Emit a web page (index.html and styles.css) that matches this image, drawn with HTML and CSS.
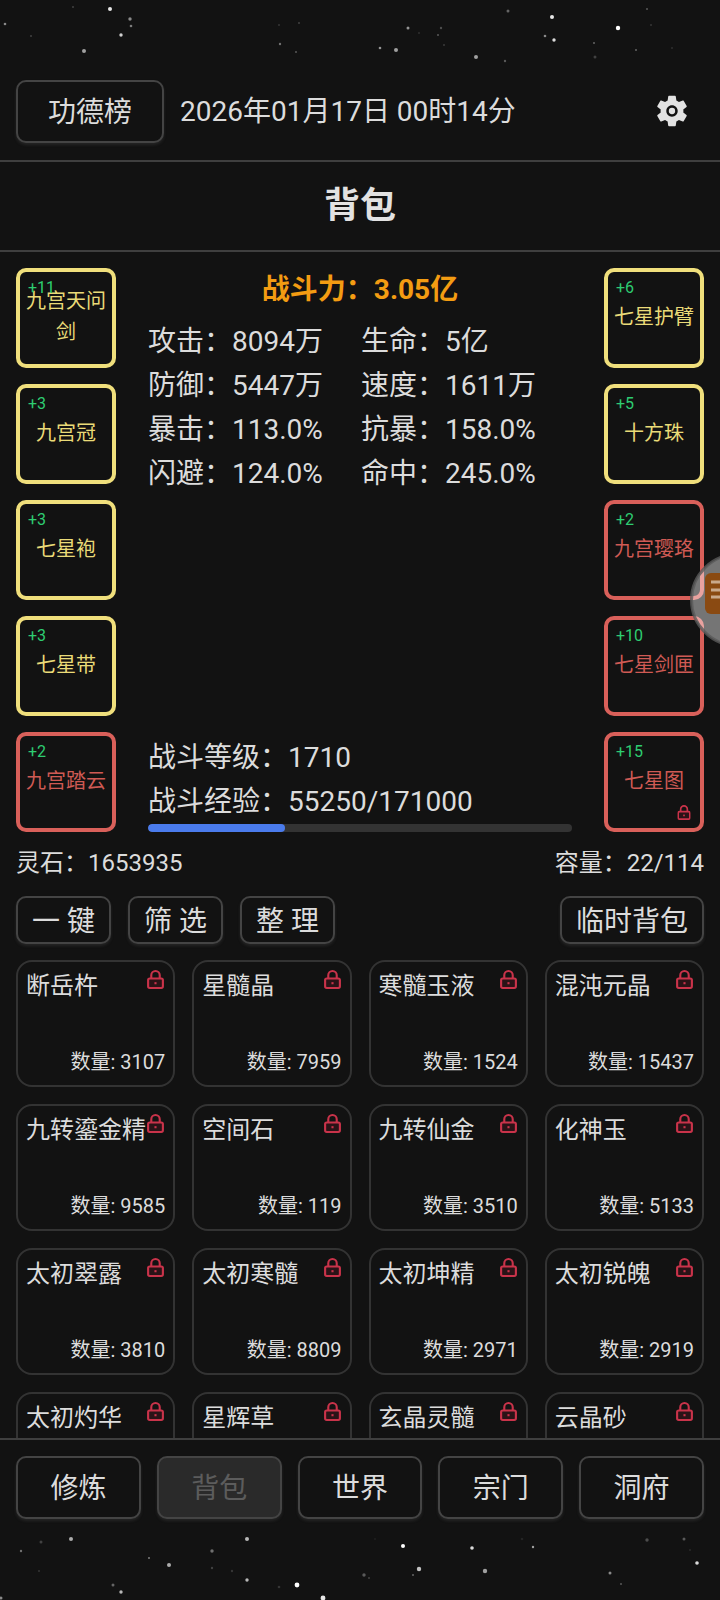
FILE: index.html
```html
<!DOCTYPE html>
<html lang="zh-CN">
<head>
<meta charset="utf-8">
<title>背包</title>
<link rel="stylesheet" href="styles.css">
</head>
<body>
<div class="app">
  <svg class="stars" width="720" height="1600" viewBox="0 0 720 1600" aria-hidden="true">
    <g fill="#fff">
      <circle cx="110" cy="9" r="2" opacity=".9"/><circle cx="130" cy="19" r="1.7" opacity=".5"/><circle cx="131" cy="26" r="1.3" opacity=".45"/><circle cx="121" cy="35" r="1.7" opacity=".8"/><circle cx="84" cy="51" r="2" opacity=".6"/><circle cx="5" cy="24" r="1.3" opacity=".5"/><circle cx="73" cy="7" r="1" opacity=".2"/><circle cx="31" cy="36" r="1" opacity=".2"/><circle cx="280" cy="44" r="1.2" opacity=".4"/><circle cx="296" cy="52" r="1" opacity=".3"/><circle cx="299" cy="23" r="1" opacity=".2"/><circle cx="279" cy="25" r="1" opacity=".15"/><circle cx="380" cy="48" r="1.3" opacity=".55"/><circle cx="396" cy="50" r="2" opacity=".6"/><circle cx="408" cy="28" r="1.5" opacity=".55"/><circle cx="441" cy="28" r="1.2" opacity=".25"/><circle cx="438" cy="35" r="1" opacity=".3"/><circle cx="444" cy="45" r=".8" opacity=".3"/><circle cx="419" cy="33" r=".7" opacity=".25"/><circle cx="476" cy="57" r="2" opacity=".6"/><circle cx="505" cy="61" r="1.2" opacity=".3"/><circle cx="508" cy="11" r="1.5" opacity=".35"/><circle cx="552" cy="17" r="2" opacity=".9"/><circle cx="545" cy="36" r="1.3" opacity=".5"/><circle cx="554" cy="40" r="1.7" opacity=".85"/><circle cx="618" cy="28" r="2.2" opacity="1"/><circle cx="594" cy="43" r="1" opacity=".35"/><circle cx="595" cy="57" r="1.5" opacity=".2"/><circle cx="636" cy="50" r="1" opacity=".35"/><circle cx="647" cy="9" r="1" opacity=".3"/><circle cx="651" cy="25" r=".8" opacity=".25"/><circle cx="672" cy="48" r="1" opacity=".12"/>
      <circle cx="71" cy="1539" r="2" opacity=".65"/><circle cx="41" cy="1542" r="1.5" opacity=".2"/><circle cx="21" cy="1551" r="1.2" opacity=".4"/><circle cx="39" cy="1571" r="1" opacity=".15"/><circle cx="149" cy="1558" r="1" opacity=".45"/><circle cx="169" cy="1565" r="2" opacity=".65"/><circle cx="113" cy="1585" r="1.5" opacity=".35"/><circle cx="121" cy="1592" r="1.7" opacity=".7"/><circle cx="247" cy="1539" r="2" opacity=".7"/><circle cx="212" cy="1551" r="1.7" opacity=".4"/><circle cx="212" cy="1568" r="1.2" opacity=".2"/><circle cx="232" cy="1571" r="1.2" opacity=".15"/><circle cx="247" cy="1580" r="1.7" opacity=".7"/><circle cx="297" cy="1585" r="2.4" opacity="1"/><circle cx="279" cy="1587" r="1.3" opacity=".15"/><circle cx="323" cy="1598" r="2.4" opacity=".9"/><circle cx="1" cy="1598" r="1.5" opacity=".5"/>
      <circle cx="403" cy="1546" r="2" opacity="1"/><circle cx="375" cy="1539" r=".8" opacity=".1"/><circle cx="419" cy="1569" r="2.2" opacity=".75"/><circle cx="413" cy="1575" r="1" opacity=".35"/><circle cx="364" cy="1575" r="1.7" opacity=".3"/><circle cx="369" cy="1578" r="1" opacity=".2"/><circle cx="472" cy="1548" r="1.8" opacity=".85"/><circle cx="533" cy="1547" r="1.2" opacity=".6"/><circle cx="485" cy="1571" r="2.2" opacity=".6"/><circle cx="522" cy="1539" r="1.3" opacity=".08"/><circle cx="647" cy="1540" r="1.7" opacity=".25"/><circle cx="684" cy="1539" r="1.5" opacity=".3"/><circle cx="697" cy="1563" r="1.8" opacity=".85"/><circle cx="690" cy="1550" r="1" opacity=".1"/><circle cx="610" cy="1573" r="1.5" opacity=".5"/><circle cx="621" cy="1584" r="1" opacity=".3"/>
    </g>
  </svg>

  <header class="topbar">
    <button class="btn rank-btn">功德榜</button>
    <span class="clock">2026年01月17日 00时14分</span>
    <svg class="gear" width="38" height="38" viewBox="0 0 24 24" aria-hidden="true">
      <path fill="#e2e2e2" d="M19.14 12.94c.04-.3.06-.61.06-.94 0-.32-.02-.64-.07-.94l2.03-1.58c.18-.14.23-.41.12-.61l-1.92-3.32c-.12-.22-.37-.29-.59-.22l-2.39.96c-.5-.38-1.03-.7-1.62-.94l-.36-2.54c-.04-.24-.24-.41-.48-.41h-3.84c-.24 0-.43.17-.47.41l-.36 2.54c-.59.24-1.13.57-1.62.94l-2.39-.96c-.22-.08-.47 0-.59.22L2.74 8.87c-.12.21-.08.47.12.61l2.03 1.58c-.05.3-.09.63-.09.94s.02.64.07.94l-2.03 1.58c-.18.14-.23.41-.12.61l1.92 3.32c.12.22.37.29.59.22l2.39-.96c.5.38 1.03.7 1.62.94l.36 2.54c.05.24.24.41.48.41h3.84c.24 0 .44-.17.47-.41l.36-2.54c.59-.24 1.13-.56 1.62-.94l2.39.96c.22.08.47 0 .59-.22l1.92-3.32c.12-.22.07-.47-.12-.61l-2.01-1.58zM12 15.6c-1.98 0-3.6-1.62-3.6-3.6s1.62-3.6 3.6-3.6 3.6 1.62 3.6 3.6-1.62 3.6-3.6 3.6z"/>
      <circle cx="12" cy="12" r="2" fill="#e2e2e2"/>
    </svg>
  </header>

  <h1 class="page-title">背包</h1>

  <main class="main">
    <section class="equip">
      <div class="slots">
        <div class="slot gold"><span class="plus">+11</span><span class="slot-name">九宫天问剑</span></div>
        <div class="slot gold"><span class="plus">+3</span><span class="slot-name">九宫冠</span></div>
        <div class="slot gold"><span class="plus">+3</span><span class="slot-name">七星袍</span></div>
        <div class="slot gold"><span class="plus">+3</span><span class="slot-name">七星带</span></div>
        <div class="slot red"><span class="plus">+2</span><span class="slot-name">九宫踏云</span></div>
      </div>
      <div class="stats">
        <div class="stats-top">
          <div class="power">战斗力：3.05亿</div>
          <div class="stat-grid">
            <div>攻击：8094万</div><div>生命：5亿</div>
            <div>防御：5447万</div><div>速度：1611万</div>
            <div>暴击：113.0%</div><div>抗暴：158.0%</div>
            <div>闪避：124.0%</div><div>命中：245.0%</div>
          </div>
        </div>
        <div class="stats-bottom">
          <div>战斗等级：1710</div>
          <div>战斗经验：55250/171000</div>
          <div class="bar"><div class="bar-fill" style="width:32.3%"></div></div>
        </div>
      </div>
      <div class="slots">
        <div class="slot gold"><span class="plus">+6</span><span class="slot-name">七星护臂</span></div>
        <div class="slot gold"><span class="plus">+5</span><span class="slot-name">十方珠</span></div>
        <div class="slot red"><span class="plus">+2</span><span class="slot-name">九宫璎珞</span></div>
        <div class="slot red"><span class="plus">+10</span><span class="slot-name">七星剑匣</span></div>
        <div class="slot red"><span class="plus">+15</span><span class="slot-name">七星图</span>
          <svg class="slot-lock" width="14" height="15" viewBox="0 0 16 18" aria-hidden="true"><use href="#lock"/></svg>
        </div>
      </div>
    </section>

    <div class="wealth"><span>灵石：1653935</span><span>容量：22/114</span></div>

    <div class="tools">
      <button class="btn tool">一 键</button>
      <button class="btn tool">筛 选</button>
      <button class="btn tool">整 理</button>
      <button class="btn tool tool-temp">临时背包</button>
    </div>

    <section class="items">
      <div class="item"><span class="item-name">断岳杵</span><svg class="lock" width="17" height="19" viewBox="0 0 16 18"><use href="#lock"/></svg><span class="item-qty">数量: 3107</span></div>
      <div class="item"><span class="item-name">星髓晶</span><svg class="lock" width="17" height="19" viewBox="0 0 16 18"><use href="#lock"/></svg><span class="item-qty">数量: 7959</span></div>
      <div class="item"><span class="item-name">寒髓玉液</span><svg class="lock" width="17" height="19" viewBox="0 0 16 18"><use href="#lock"/></svg><span class="item-qty">数量: 1524</span></div>
      <div class="item"><span class="item-name">混沌元晶</span><svg class="lock" width="17" height="19" viewBox="0 0 16 18"><use href="#lock"/></svg><span class="item-qty">数量: 15437</span></div>
      <div class="item"><span class="item-name">九转鎏金精</span><svg class="lock" width="17" height="19" viewBox="0 0 16 18"><use href="#lock"/></svg><span class="item-qty">数量: 9585</span></div>
      <div class="item"><span class="item-name">空间石</span><svg class="lock" width="17" height="19" viewBox="0 0 16 18"><use href="#lock"/></svg><span class="item-qty">数量: 119</span></div>
      <div class="item"><span class="item-name">九转仙金</span><svg class="lock" width="17" height="19" viewBox="0 0 16 18"><use href="#lock"/></svg><span class="item-qty">数量: 3510</span></div>
      <div class="item"><span class="item-name">化神玉</span><svg class="lock" width="17" height="19" viewBox="0 0 16 18"><use href="#lock"/></svg><span class="item-qty">数量: 5133</span></div>
      <div class="item"><span class="item-name">太初翠露</span><svg class="lock" width="17" height="19" viewBox="0 0 16 18"><use href="#lock"/></svg><span class="item-qty">数量: 3810</span></div>
      <div class="item"><span class="item-name">太初寒髓</span><svg class="lock" width="17" height="19" viewBox="0 0 16 18"><use href="#lock"/></svg><span class="item-qty">数量: 8809</span></div>
      <div class="item"><span class="item-name">太初坤精</span><svg class="lock" width="17" height="19" viewBox="0 0 16 18"><use href="#lock"/></svg><span class="item-qty">数量: 2971</span></div>
      <div class="item"><span class="item-name">太初锐魄</span><svg class="lock" width="17" height="19" viewBox="0 0 16 18"><use href="#lock"/></svg><span class="item-qty">数量: 2919</span></div>
      <div class="item"><span class="item-name">太初灼华</span><svg class="lock" width="17" height="19" viewBox="0 0 16 18"><use href="#lock"/></svg></div>
      <div class="item"><span class="item-name">星辉草</span><svg class="lock" width="17" height="19" viewBox="0 0 16 18"><use href="#lock"/></svg></div>
      <div class="item"><span class="item-name">玄晶灵髓</span><svg class="lock" width="17" height="19" viewBox="0 0 16 18"><use href="#lock"/></svg></div>
      <div class="item"><span class="item-name">云晶砂</span><svg class="lock" width="17" height="19" viewBox="0 0 16 18"><use href="#lock"/></svg></div>
    </section>
  </main>

  <nav class="nav">
    <button class="btn nav-btn">修炼</button>
    <button class="btn nav-btn is-active">背包</button>
    <button class="btn nav-btn">世界</button>
    <button class="btn nav-btn">宗门</button>
    <button class="btn nav-btn">洞府</button>
  </nav>
  <div class="footer-space"></div>

  <svg class="float-ball" width="96" height="96" viewBox="0 0 96 96" aria-hidden="true">
    <circle cx="48" cy="48" r="45.5" fill="#fff" fill-opacity=".42" stroke="#5a5a5a" stroke-opacity=".8" stroke-width="3"/>
    <rect x="16" y="21" width="44" height="41" rx="6" fill="#8a4a12"/>
    <g fill="#c9a98c">
      <rect x="22" y="28.5" width="24" height="3"/>
      <rect x="22" y="36.5" width="24" height="3"/>
      <rect x="22" y="43.5" width="24" height="3"/>
    </g>
  </svg>

  <svg class="defs" width="0" height="0" aria-hidden="true">
    <symbol id="lock" viewBox="0 0 16 18">
      <path d="M4 8V5a4 4 0 0 1 8 0v3" fill="none" stroke="#c9334a" stroke-width="2"/>
      <rect x="1" y="8" width="14" height="9" rx="1.5" fill="#2a1317" stroke="#c9334a" stroke-width="2"/>
      <rect x="7" y="11.5" width="2" height="2" fill="#c9334a"/>
    </symbol>
  </svg>
</div>
</body>
</html>
```

FILE: styles.css
```css
* { box-sizing: border-box; }

html, body {
  margin: 0;
  padding: 0;
  background: #121212;
}

body {
  font-family: Roboto, "Noto Sans CJK SC", sans-serif;
  color: #dcdcdc;
}

.app {
  position: relative;
  width: 720px;
  height: 1600px;
  display: flex;
  flex-direction: column;
  overflow: hidden;
  background: #121212;
}

.stars {
  position: absolute;
  left: 0;
  top: 0;
  filter: blur(0.6px);
}

.defs {
  position: absolute;
}

.btn {
  font-family: inherit;
  color: #dcdcdc;
  background: #121212;
  border: 2px solid #444;
  border-radius: 10px;
  box-shadow: 0 2px 3px rgba(90, 90, 90, 0.25);
  padding: 0 0 3px;
}

.topbar {
  position: relative;
  flex: none;
  height: 162px;
  padding: 80px 29px 0 16px;
  display: flex;
  align-items: flex-start;
  border-bottom: 2px solid #3f3f3f;
}

.rank-btn {
  width: 148px;
  height: 63px;
  font-size: 28px;
}

.clock {
  margin-left: 16px;
  line-height: 64px;
  font-size: 28px;
}

.gear {
  margin-left: auto;
  margin-top: 12px;
}

.page-title {
  flex: none;
  height: 90px;
  margin: 0;
  line-height: 88px;
  text-align: center;
  font-size: 36px;
  font-weight: 700;
  color: #e2e2e2;
  border-bottom: 2px solid #3f3f3f;
}

.main {
  flex: 1;
  min-height: 0;
  padding: 16px 16px 0;
  overflow: hidden;
}

.equip {
  display: grid;
  grid-template-columns: 100px 1fr 100px;
  column-gap: 32px;
  height: 564px;
}

.slots {
  display: flex;
  flex-direction: column;
  gap: 16px;
}

.slot {
  position: relative;
  width: 100px;
  height: 100px;
  padding: 0 6px 2px;
  border: 4px solid;
  border-radius: 10px;
  display: flex;
  align-items: center;
  justify-content: center;
  text-align: center;
}

.slot.gold { border-color: #f0df7c; color: #eadb78; }
.slot.red { border-color: #d9605a; color: #cf5a54; }

.slot-name {
  font-size: 20px;
  line-height: 31px;
}

.plus {
  position: absolute;
  left: 8px;
  top: 6px;
  font-size: 16px;
  line-height: 20px;
  color: #2ecc71;
}

.slot-lock {
  position: absolute;
  right: 9px;
  bottom: 8px;
}

.stats {
  display: flex;
  flex-direction: column;
  justify-content: space-between;
  font-size: 28px;
  line-height: 44px;
}

.power {
  height: 52px;
  line-height: 44px;
  text-align: center;
  font-weight: 700;
  color: #f39c12;
}

.stat-grid {
  display: grid;
  grid-template-columns: 213px 1fr;
}

.bar {
  height: 8px;
  border-radius: 4px;
  background: #333;
  overflow: hidden;
}

.bar-fill {
  height: 100%;
  border-radius: 4px;
  background: #4a7bec;
}

.wealth {
  display: flex;
  justify-content: space-between;
  margin-top: 13px;
  font-size: 24px;
  line-height: 36px;
}

.tools {
  display: flex;
  gap: 17px;
  margin-top: 15px;
}

.tool {
  width: 95px;
  height: 48px;
  font-size: 28px;
}

.tool-temp {
  width: 144px;
  margin-left: auto;
}

.items {
  display: grid;
  grid-template-columns: repeat(4, 1fr);
  gap: 17px;
  margin-top: 16px;
}

.item {
  position: relative;
  height: 127px;
  padding: 9px 8px 10px;
  border: 2px solid #333;
  border-radius: 16px;
  display: flex;
  flex-direction: column;
}

.item-name {
  font-size: 24px;
  line-height: 30px;
  white-space: nowrap;
}

.item-qty {
  margin-top: auto;
  text-align: right;
  font-size: 20px;
  line-height: 26px;
}

.lock {
  position: absolute;
  right: 9px;
  top: 8px;
}

.nav {
  flex: none;
  height: 81px;
  padding: 16px 16px 0;
  display: flex;
  gap: 16px;
  border-top: 2px solid #3f3f3f;
}

.nav-btn {
  flex: 1;
  height: 63px;
  font-size: 28px;
}

.nav-btn.is-active {
  background: #2a2a2a;
  color: #5c5c5c;
}

.footer-space {
  flex: none;
  height: 81px;
}

.float-ball {
  position: absolute;
  left: 689px;
  top: 552px;
}
```
